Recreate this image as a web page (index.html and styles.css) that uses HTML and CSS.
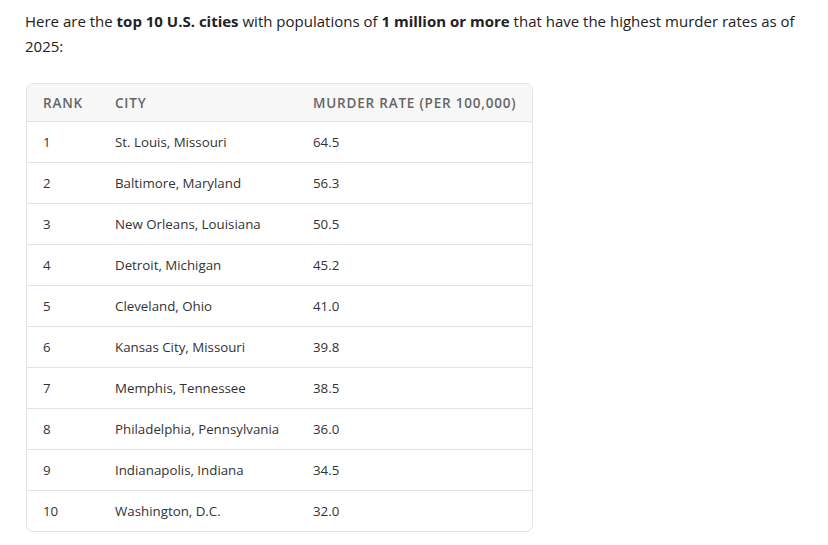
FILE: index.html
```html
<!DOCTYPE html>
<html>
<head>
<meta charset="utf-8">
<link rel="stylesheet" href="styles.css">
</head>
<body>
<div class="content">
  <p class="intro"><span>Here are the</span> <strong>top 10 U.S. cities</strong> <span>with populations of</span> <strong>1 million or more</strong> <span>that have the highest murder rates as of</span> <span>2025:</span></p>
  <div class="table-wrap">
    <table class="data">
      <colgroup><col class="c-rank"><col class="c-city"><col class="c-rate"></colgroup>
      <thead>
        <tr><th>Rank</th><th>City</th><th>Murder Rate (per 100,000)</th></tr>
      </thead>
      <tbody>
        <tr><td>1</td><td>St. Louis, Missouri</td><td>64.5</td></tr>
        <tr><td>2</td><td>Baltimore, Maryland</td><td>56.3</td></tr>
        <tr><td>3</td><td>New Orleans, Louisiana</td><td>50.5</td></tr>
        <tr><td>4</td><td>Detroit, Michigan</td><td>45.2</td></tr>
        <tr><td>5</td><td>Cleveland, Ohio</td><td>41.0</td></tr>
        <tr><td>6</td><td>Kansas City, Missouri</td><td>39.8</td></tr>
        <tr><td>7</td><td>Memphis, Tennessee</td><td>38.5</td></tr>
        <tr><td>8</td><td>Philadelphia, Pennsylvania</td><td>36.0</td></tr>
        <tr><td>9</td><td>Indianapolis, Indiana</td><td>34.5</td></tr>
        <tr><td>10</td><td>Washington, D.C.</td><td>32.0</td></tr>
      </tbody>
    </table>
  </div>
</div>
</body>
</html>
```
FILE: styles.css
```css
html, body {
  margin: 0;
  padding: 0;
  background: #ffffff;
}
body {
  font-family: "Open Sans", Lato, sans-serif;
  color: #222222;
}
.content {
  padding: 9px 20px 0 25px;
}
.intro {
  margin: 0;
  font-size: 15px;
  line-height: 25px;
  color: #222;
}
.intro strong {
  font-weight: 700;
}
.table-wrap {
  margin-top: 24px;
  margin-left: 1px;
  width: 505px;
  border: 1px solid #e3e3e3;
  border-radius: 7px;
  overflow: hidden;
}
.data {
  width: 505px;
  table-layout: fixed;
  border-collapse: collapse;
  font-size: 13.3px;
}
.data th {
  background: #f7f7f7;
  color: #666;
  font-size: 13.5px;
  font-weight: 600;
  letter-spacing: 0.8px;
  text-transform: uppercase;
  text-align: left;
  white-space: nowrap;
  height: 37px;
  padding: 0 0 0 16px;
  border-bottom: 1px solid #e3e3e3;
}
.data td {
  color: #333;
  white-space: nowrap;
  height: 40px;
  padding: 0 0 0 16px;
  border-bottom: 1px solid #e3e3e3;
}
.data tbody tr:last-child td {
  border-bottom: none;
}
.c-rank { width: 72px; }
.c-city { width: 198px; }
.c-rate { width: 235px; }
```
